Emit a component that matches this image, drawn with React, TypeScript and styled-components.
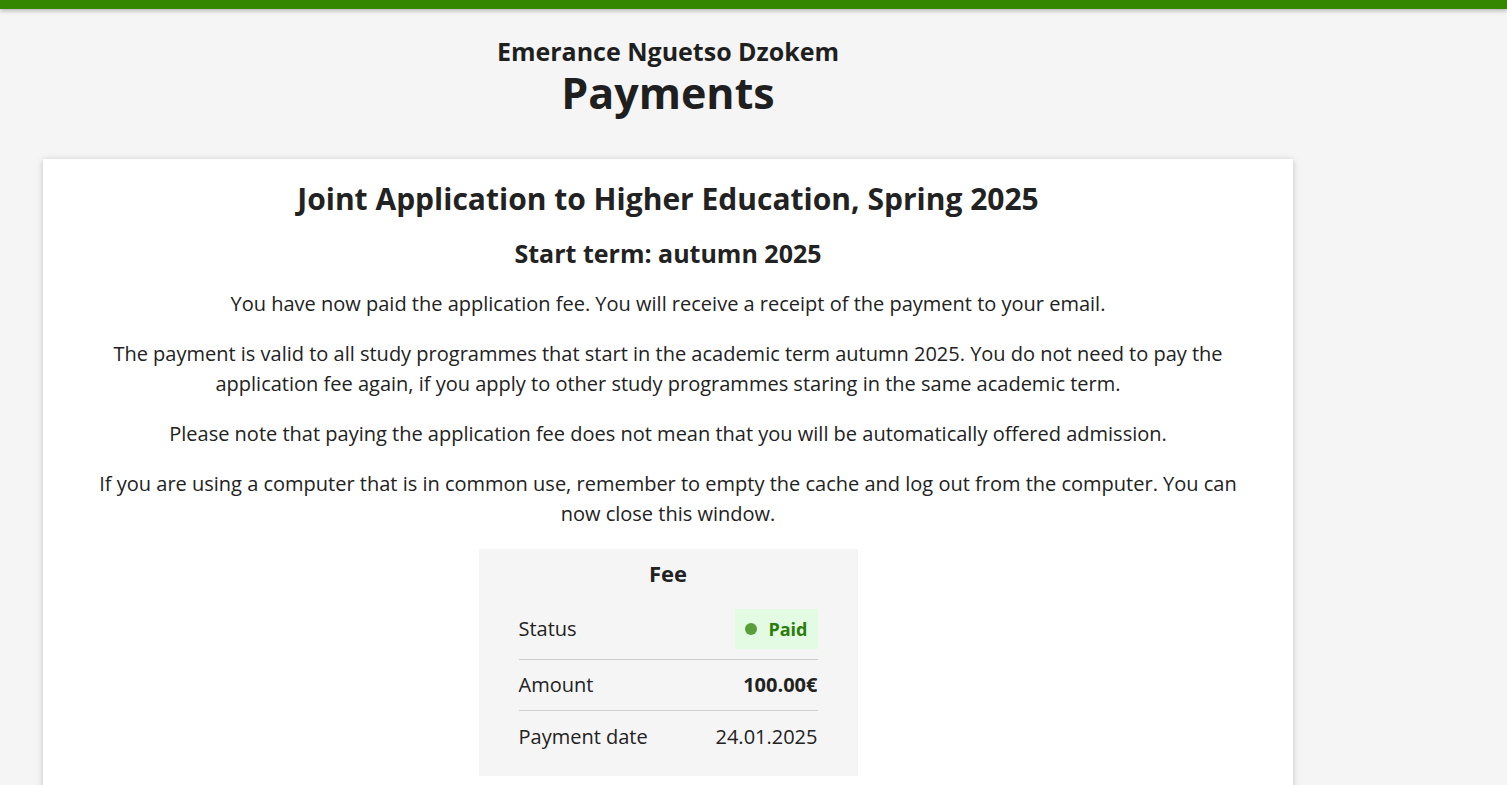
import React from "react";
import styled, { createGlobalStyle } from "styled-components";

const GlobalStyle = createGlobalStyle`
  html, body {
    margin: 0;
    padding: 0;
    background: #f5f5f5;
    font-family: "Open Sans", "Noto Sans", sans-serif;
    color: #222222;
  }
  * { box-sizing: border-box; }
`;

const TopBar = styled.div`
  height: 9px;
  background: #358600;
  box-shadow: 0 2px 4px rgba(0, 0, 0, 0.25);
`;

const Page = styled.main`
  width: 1250px;
  margin-left: 43px;
  padding-top: 27px;
`;

const Header = styled.header`
  display: flex;
  flex-direction: column;
  align-items: center;
  margin-bottom: 39px;
`;

const UserName = styled.div`
  font-size: 25px;
  font-weight: 700;
  line-height: 30px;
  color: #1f1f1f;
`;

const PageTitle = styled.h1`
  margin: 0;
  font-size: 43px;
  font-weight: 700;
  line-height: 54px;
  color: #1f1f1f;
`;

const Card = styled.section`
  background: #ffffff;
  box-shadow: 0 1px 6px rgba(0, 0, 0, 0.22);
  padding: 20px 50px 40px;
  display: flex;
  flex-direction: column;
  align-items: center;
  text-align: center;
`;

const CardTitle = styled.h2`
  margin: 0;
  font-size: 30px;
  font-weight: 700;
  line-height: 40px;
`;

const SubTitle = styled.h3`
  margin: 18px 0 20px;
  font-size: 25px;
  font-weight: 700;
  line-height: 32px;
`;

const Paragraph = styled.p`
  margin: 0 0 20px;
  font-size: 20px;
  line-height: 30px;
  color: #222222;
`;

const FeeBox = styled.div`
  width: 379px;
  background: #f5f5f5;
  padding: 8px 40px 14px;
`;

const FeeTitle = styled.div`
  font-size: 22px;
  font-weight: 700;
  line-height: 32px;
  margin-bottom: 10px;
`;

const FeeRow = styled.div<{ $first?: boolean; $last?: boolean }>`
  display: flex;
  align-items: center;
  justify-content: space-between;
  height: ${(p) => (p.$first ? "61px" : "51px")};
  border-bottom: ${(p) => (p.$last ? "none" : "1px solid #cfcfcf")};
  font-size: 20px;
  line-height: 28px;
`;

const Label = styled.span`
  color: #222222;
`;

const Value = styled.span<{ $bold?: boolean }>`
  font-weight: ${(p) => (p.$bold ? 700 : 400)};
`;

const Badge = styled.span`
  display: inline-flex;
  align-items: center;
  gap: 11px;
  height: 40px;
  padding: 0 10px;
  background: #e3fae3;
  color: #2b7d0a;
  font-weight: 700;
  font-size: 18px;
`;

const Dot = styled.span`
  width: 12px;
  height: 12px;
  border-radius: 50%;
  background: #5a9e3a;
`;

type Row = { label: string; value: React.ReactNode; bold?: boolean };

export default function App() {
  const rows: Row[] = [
    {
      label: "Status",
      value: (
        <Badge>
          <Dot />
          Paid
        </Badge>
      ),
    },
    { label: "Amount", value: "100.00€", bold: true },
    { label: "Payment date", value: "24.01.2025" },
  ];
  return (
    <>
      <GlobalStyle />
      <TopBar />
      <Page>
        <Header>
          <UserName>Emerance Nguetso Dzokem</UserName>
          <PageTitle>Payments</PageTitle>
        </Header>
        <Card>
          <CardTitle>Joint Application to Higher Education, Spring 2025</CardTitle>
          <SubTitle>Start term: autumn 2025</SubTitle>
          <Paragraph>
            You have now paid the application fee. You will receive a receipt of the payment to your email.
          </Paragraph>
          <Paragraph>
            The payment is valid to all study programmes that start in the academic term autumn 2025. You do not
            need to pay the application fee again, if you apply to other study programmes staring in the same
            academic term.
          </Paragraph>
          <Paragraph>
            Please note that paying the application fee does not mean that you will be automatically offered
            admission.
          </Paragraph>
          <Paragraph>
            If you are using a computer that is in common use, remember to empty the cache and log out from the
            computer. You can now close this window.
          </Paragraph>
          <FeeBox>
            <FeeTitle>Fee</FeeTitle>
            {rows.map((r, i) => (
              <FeeRow key={r.label} $first={i === 0} $last={i === rows.length - 1}>
                <Label>{r.label}</Label>
                <Value $bold={r.bold}>{r.value}</Value>
              </FeeRow>
            ))}
          </FeeBox>
        </Card>
      </Page>
    </>
  );
}
